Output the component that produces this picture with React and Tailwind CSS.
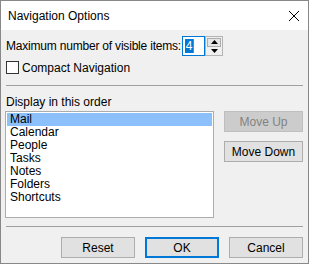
const items = ['Mail', 'Calendar', 'People', 'Tasks', 'Notes', 'Folders', 'Shortcuts']

export default function App() {
  return (
    <div
      className="flex h-[264px] w-[309px] flex-col border border-[#888888] bg-[#f0f0f0] text-[12px] leading-[14px] text-black"
      style={{ fontFamily: '"Liberation Sans", Arial, sans-serif' }}
    >
      {/* Title bar */}
      <div className="flex h-[29px] shrink-0 items-center justify-between bg-white pl-[7px] pr-[9px]">
        <span className="text-[12px]">Navigation Options</span>
        <svg viewBox="0 0 10 10" className="h-[10px] w-[10px]" fill="none" stroke="#000" strokeWidth="1">
          <path d="M0 0 10 10M10 0 0 10" />
        </svg>
      </div>

      <div className="flex flex-1 flex-col px-[5px]">
        {/* Max visible items */}
        <div className="mt-[6px] flex h-[20px] items-center">
          <span className="w-[176px] whitespace-nowrap tracking-[-0.2px]">Maximum number of visible items:</span>
          <div className="flex h-[20px] w-[23px] items-center border border-[#0078d7] bg-white pl-[2px]">
            <span className="flex h-[14px] w-[8px] items-center justify-center bg-[#0078d7] text-white">4</span>
            <span className="h-[14px] w-[1px] bg-[#d86a1a]" />
          </div>
          <div className="flex h-[20px] w-[18px] flex-col gap-[1px] border border-[#b4b4b4] bg-[#f0f0f0] p-[1px]">
            <div className="flex flex-1 items-center justify-center border border-[#adadad] bg-[#e5e5e5]">
              <svg viewBox="0 0 7 4" className="h-[4px] w-[7px]"><path d="M3.5 0 7 4H0z" fill="#000" /></svg>
            </div>
            <div className="flex flex-1 items-center justify-center">
              <svg viewBox="0 0 7 4" className="h-[4px] w-[7px]"><path d="M0 0h7L3.5 4z" fill="#000" /></svg>
            </div>
          </div>
        </div>

        {/* Compact navigation */}
        <div className="mt-[5px] flex h-[13px] items-center">
          <span className="h-[13px] w-[13px] border border-[#333333] bg-white" />
          <span className="ml-[3px]">Compact Navigation</span>
        </div>

        <div className="mt-[11px] h-[1px] bg-[#a0a0a0]" />

        <div className="mt-[9px] h-[14px]">Display in this order</div>

        <div className="mt-[2px] flex">
          <div className="-ml-[1px] h-[107px] w-[209px] border border-[#acacac] bg-white p-[1px]">
            {items.map((item, i) => (
              <div
                key={item}
                className={'flex h-[13px] items-center pl-[3px] leading-[13px] ' + (i === 0 ? 'bg-[#8cc0fa]' : '')}
              >
                {item}
              </div>
            ))}
          </div>
          <div className="ml-[10px] flex flex-col">
            <button className="h-[21px] w-[79px] border border-[#bfbfbf] bg-[#cccccc] text-[#838383]">Move Up</button>
            <button className="mt-[9px] h-[21px] w-[79px] border border-[#adadad] bg-[#e1e1e1]">Move Down</button>
          </div>
        </div>

        <div className="mt-[8px] h-[1px] bg-[#a0a0a0]" />

        <div className="mt-[10px] flex justify-end gap-[10px]">
          <button className="h-[21px] w-[74px] border border-[#adadad] bg-[#e1e1e1]">Reset</button>
          <button className="h-[21px] w-[74px] border-2 border-[#0078d7] bg-[#e1e1e1]">OK</button>
          <button className="h-[21px] w-[74px] border border-[#adadad] bg-[#e1e1e1]">Cancel</button>
        </div>
      </div>
    </div>
  )
}
